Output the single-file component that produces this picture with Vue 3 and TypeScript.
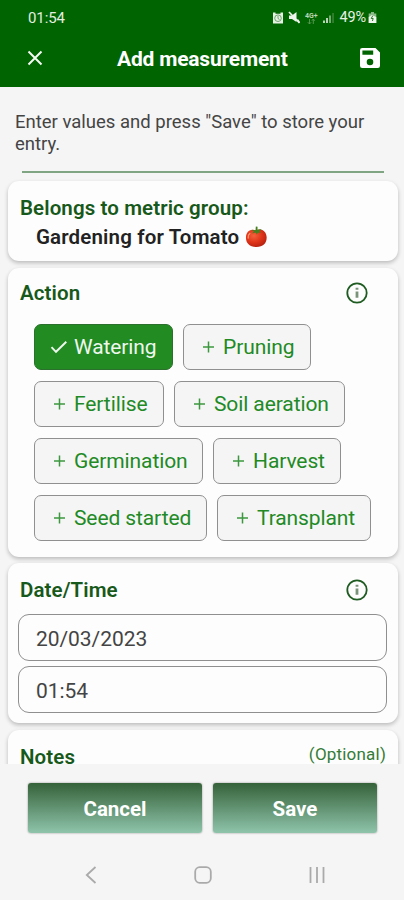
<script setup lang="ts">
interface Chip {
  label: string
  width: number
  selected?: boolean
}

const rows: Chip[][] = [
  [{ label: 'Watering', width: 139, selected: true }, { label: 'Pruning', width: 128 }],
  [{ label: 'Fertilise', width: 130 }, { label: 'Soil aeration', width: 171 }],
  [{ label: 'Germination', width: 169 }, { label: 'Harvest', width: 128 }],
  [{ label: 'Seed started', width: 173 }, { label: 'Transplant', width: 154 }],
]
const fields: string[] = ['20/03/2023', '01:54']
</script>

<template>
  <div class="screen">
    <header class="top">
      <div class="status">
        <span class="clock">01:54</span>
        <div class="indicators">
          <svg class="alarm" width="12" height="12" viewBox="0 0 12 12">
            <path d="M1 .5h2.5v1.2h5V.5H11v11H1z" fill="#e6f0e4" />
            <circle cx="6" cy="6.2" r="3.3" fill="none" stroke="#4f9150" stroke-width=".8" />
            <path d="M6 4v2.5l1.5 1" fill="none" stroke="#4f9150" stroke-width=".8" />
          </svg>
          <svg class="mute" width="13" height="13" viewBox="0 0 13 13">
            <path d="M1 4.5h3L8.5 1v10L4 8H1z" fill="#edf4ec" />
            <path d="M1 1l10.5 11" stroke="#edf4ec" stroke-width="1.7" />
            <path d="M9.5 8.5l2 2.8" stroke="#edf4ec" stroke-width="1.3" />
          </svg>
          <svg class="net" width="13" height="14" viewBox="0 0 13 14">
            <text x="0" y="6.5">4G+</text>
            <path d="M4.5 8v5M2.8 11.2l1.7 1.8 1.7-1.8M8.3 13V8M6.8 9.8L8.3 8 9.8 9.8" fill="none" stroke="#5c9b58" stroke-width=".9" />
          </svg>
          <svg class="signal" width="12" height="12" viewBox="0 0 12 12">
            <path d="M0 11h2V8.5H0zM3 11h2V6H3z" fill="#b9d5b7" />
            <path d="M6 11h2V3.5H6z" fill="#75ab72" />
            <path d="M9.3 11h1.5V1H9.3z" fill="#3d8639" />
          </svg>
          <span class="percent">49%</span>
          <svg class="battery" width="9" height="13" viewBox="0 0 9 13">
            <path d="M3 1h3v1.5h2.3V12H.7V2.5H3z" fill="#8cb989" />
            <path d="M.7 6L4 4l4.3 2v6H.7z" fill="#edf5ec" />
            <path d="M4.8 4.7L3.2 7.5h2L4.4 10" fill="none" stroke="#2a7926" />
          </svg>
        </div>
      </div>
      <div class="bar">
        <svg width="16" height="16" viewBox="0 0 16 16">
          <path d="M1.5 1.5l13 13M14.5 1.5l-13 13" stroke="#f4faf3" stroke-width="2" />
        </svg>
        <h1>Add measurement</h1>
        <svg width="20" height="20" viewBox="0 0 20 20">
          <path
            fill="#fff"
            fill-rule="evenodd"
            d="M2.2 0H15.5L20 4.5V17.8A2.2 2.2 0 0 1 17.8 20H2.2A2.2 2.2 0 0 1 0 17.8V2.2A2.2 2.2 0 0 1 2.2 0ZM2.4 2.4V6.7H13.2V2.4ZM10 10.7A3.3 3.3 0 1 0 10 17.3A3.3 3.3 0 1 0 10 10.7Z"
          />
        </svg>
      </div>
    </header>

    <main class="content">
      <p class="intro">Enter values and press "Save" to store your entry.</p>
      <hr class="rule" />

      <section class="card group">
        <h2>Belongs to metric group:</h2>
        <div class="name">
          <span>Gardening for Tomato</span>
          <svg width="23" height="22" viewBox="0 0 24 22" preserveAspectRatio="none">
            <defs>
              <radialGradient id="skin" cx=".38" cy=".35" r=".7">
                <stop offset="0" stop-color="#f4623c" />
                <stop offset=".55" stop-color="#df3419" />
                <stop offset="1" stop-color="#b52010" />
              </radialGradient>
            </defs>
            <path d="M11.5 4.3C17.5 2 22.5 5.5 22.6 11.5C22.6 17.5 18.5 21 12 21C5 21 1 17.5 1 11.5C1.2 5.5 5.5 2.5 11.5 4.3Z" fill="url(#skin)" />
            <path d="M5 7.5Q3 9 3.3 12" fill="none" stroke="#ff9a73" stroke-width="1.3" stroke-linecap="round" />
            <path d="M11 4.2L11.3.6l1.8.2-.1 3 4.5-.7-2.5 2.2 1.8 1.7-3.4-.6-1 2-1.4-2-3.6 1.2 1.9-2.1-2.5-1.8z" fill="#44801f" />
          </svg>
        </div>
      </section>

      <section class="card action">
        <div class="head">
          <h2>Action</h2>
          <svg class="info" width="22" height="22" viewBox="0 0 22 22">
            <circle cx="11" cy="11" r="9.7" fill="none" stroke="#1f5c22" stroke-width="1.8" />
            <path d="M11 9.5v6.3M11 5.7v2" stroke="#7a947a" stroke-width="2.8" />
          </svg>
        </div>
        <div class="chips">
          <div v-for="(row, i) in rows" :key="i" class="chip-row">
            <button
              v-for="chip in row"
              :key="chip.label"
              class="chip"
              :class="{ selected: chip.selected }"
              :style="{ width: chip.width + 'px' }"
            >
              <svg width="18" height="14" viewBox="0 0 18 14">
                <path v-if="chip.selected" d="M1.5 7.2l4.5 4.6L16.3 1.7" />
                <path v-else d="M4 7h11M9.5 1.5v11" />
              </svg>
              <span>{{ chip.label }}</span>
            </button>
          </div>
        </div>
      </section>

      <section class="card datetime">
        <div class="head">
          <h2>Date/Time</h2>
          <svg class="info" width="22" height="22" viewBox="0 0 22 22">
            <circle cx="11" cy="11" r="9.7" fill="none" stroke="#1f5c22" stroke-width="1.8" />
            <path d="M11 9.5v6.3M11 5.7v2" stroke="#7a947a" stroke-width="2.8" />
          </svg>
        </div>
        <div class="fields">
          <div v-for="value in fields" :key="value" class="field">{{ value }}</div>
        </div>
      </section>

      <section class="card notes">
        <h2>Notes</h2>
        <span class="optional">(Optional)</span>
      </section>
    </main>

    <footer class="actions">
      <button class="cancel">Cancel</button>
      <button class="save">Save</button>
    </footer>

    <nav class="system">
      <svg width="12" height="20" viewBox="0 0 12 20">
        <path d="M10.5 2L1.8 10l8.7 8" />
      </svg>
      <svg width="18" height="18" viewBox="0 0 18 18">
        <rect x="1.2" y="1.2" width="15.6" height="15.6" rx="4.5" />
      </svg>
      <svg width="18" height="18" viewBox="0 0 18 18">
        <path d="M2.5 1v16M9 1v16M15.5 1v16" />
      </svg>
    </nav>
  </div>
</template>

<style>
body {
  background: #f5f5f5;
}
</style>

<style scoped>
.screen {
  width: 404px;
  height: 900px;
  display: flex;
  flex-direction: column;
  overflow: hidden;
  background: #f5f5f5;
  font-family: Roboto, "Liberation Sans", sans-serif;
  color: #222;
}
.screen * {
  box-sizing: border-box;
}
h1, h2, p {
  margin: 0;
  white-space: nowrap;
}
button {
  font-family: inherit;
  padding: 0;
  white-space: nowrap;
}
svg {
  display: block;
  flex: none;
}
.top {
  flex: none;
  height: 87px;
  background: #006400;
  color: #fff;
}
.status {
  height: 35px;
  padding: 0 27px 0 28px;
  display: flex;
  justify-content: space-between;
  align-items: center;
}
.clock {
  font-size: 15px;
  line-height: 18px;
  letter-spacing: -0.1px;
  color: #e3eee1;
}
.indicators {
  display: flex;
  align-items: center;
}
.mute {
  margin-left: 4px;
}
.net {
  margin-left: 4px;
}
.net text {
  font-size: 7px;
  font-weight: 700;
  fill: #b8d5b6;
}
.signal {
  margin-left: 5px;
}
.percent {
  margin-left: 4px;
  font-size: 14.5px;
  line-height: 18px;
  letter-spacing: -0.1px;
  color: #e8f1e7;
}
.battery {
  margin-left: 2px;
}
.bar {
  height: 46px;
  padding: 0 24px 0 27px;
  display: flex;
  align-items: center;
}
.bar h1 {
  margin: 2px auto 0 74px;
  font-size: 21px;
  font-weight: 700;
  line-height: 26px;
  letter-spacing: -0.2px;
}
.content {
  flex: none;
  height: 677px;
  overflow: hidden;
  padding: 0 6px 0 8px;
}
.intro {
  margin: 24px 0 0 7px;
  width: 370px;
  white-space: normal;
  font-size: 18.5px;
  line-height: 22px;
  color: #444;
}
.rule {
  margin: 16px 14px 8px;
  height: 2px;
  border: 0;
  background: #80a583;
}
.card {
  background: #fdfdfd;
  border-radius: 11px;
  box-shadow: 0 2px 4px rgba(0, 0, 0, 0.24);
}
h2 {
  font-size: 20.5px;
  font-weight: 600;
  line-height: 26px;
  letter-spacing: 0.1px;
  color: #17591a;
}
.group {
  height: 80px;
  padding: 14px 0 0 12px;
}
.name {
  margin: 4px 0 0 16px;
  display: flex;
  align-items: center;
  gap: 6px;
  font-size: 20.5px;
  font-weight: 600;
  line-height: 24px;
  letter-spacing: 0.15px;
  white-space: nowrap;
}
.head {
  display: flex;
  align-items: center;
  justify-content: space-between;
  padding: 0 30px 0 12px;
}
.action {
  margin-top: 7px;
  height: 289px;
  padding-top: 12px;
}
.chips {
  margin: 18px 0 0 26px;
  display: flex;
  flex-direction: column;
  gap: 11px;
}
.chip-row {
  display: flex;
  gap: 10px;
}
.chip {
  height: 46px;
  display: flex;
  align-items: center;
  gap: 6px;
  padding-left: 15px;
  border: 1px solid #909090;
  border-radius: 7px;
  background: #f5f5f5;
  color: #218a25;
  font-size: 21px;
  line-height: 26px;
  letter-spacing: -0.1px;
}
.chip path {
  fill: none;
  stroke: #3c983f;
  stroke-width: 1.5;
}
.chip.selected {
  background: #228b22;
  border-color: #2b702c;
  color: #eef7ee;
}
.chip.selected path {
  stroke: #eef7ee;
  stroke-width: 1.9;
}
.datetime {
  margin-top: 6px;
  height: 160px;
  padding-top: 14px;
}
.fields {
  margin: 11px 11px 0 10px;
  display: flex;
  flex-direction: column;
  gap: 5px;
}
.field {
  height: 47px;
  padding: 1px 0 0 17px;
  border: 1px solid #8f8f8f;
  border-radius: 11px;
  font-size: 21px;
  line-height: 46px;
  letter-spacing: -0.05px;
  color: #444;
}
.notes {
  margin-top: 7px;
  height: 90px;
  padding: 14px 12px 0;
  display: flex;
  justify-content: space-between;
}
.optional {
  margin-top: -1px;
  font-size: 17px;
  line-height: 22px;
  letter-spacing: 0.2px;
  color: #347b36;
}
.actions {
  flex: none;
  padding: 19px 26px 0 28px;
  display: flex;
  gap: 11px;
}
.actions button {
  height: 50px;
  padding-top: 1px;
  border: 0;
  border-radius: 3px;
  background: linear-gradient(#356239, #8fc4ab);
  box-shadow: 0 0 2px rgba(0, 0, 0, 0.45);
  color: #fff;
  font-size: 20.5px;
  font-weight: 700;
}
.cancel {
  width: 174px;
}
.save {
  width: 164px;
}
.system {
  margin-top: 32px;
  padding: 0 78px 0 85px;
  display: flex;
  align-items: center;
  justify-content: space-between;
}
.system path,
.system rect {
  fill: none;
  stroke: #aaa;
  stroke-width: 1.8;
}
</style>
